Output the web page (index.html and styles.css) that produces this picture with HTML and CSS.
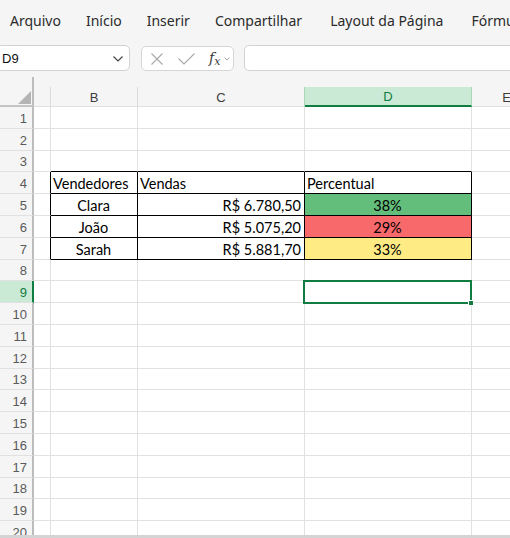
FILE: index.html
```html
<!DOCTYPE html>
<html lang="pt-BR">
<head>
<meta charset="utf-8">
<title>Planilha</title>
<link rel="stylesheet" href="styles.css">
</head>
<body>
<div class="menu">
  <span>Arquivo</span><span>Início</span><span>Inserir</span><span>Compartilhar</span><span class="wide">Layout da Página</span><span class="wide">Fórmulas</span>
</div>
<div class="fbar">
  <div class="namebox"><span class="ref">D9</span>
    <svg class="nb-chev" width="10" height="6" viewBox="0 0 10 6"><polyline points="0.5,0.5 5,5 9.5,0.5" fill="none" stroke="#444" stroke-width="1.2"/></svg>
  </div>
  <div class="fxbox">
    <svg class="ic-x" width="12" height="12" viewBox="0 0 12 12"><path d="M0.5 0.5 L11.5 11.5 M11.5 0.5 L0.5 11.5" stroke="#a8a8a8" stroke-width="1.1" fill="none"/></svg>
    <svg class="ic-ok" width="17" height="12" viewBox="0 0 17 12"><polyline points="0.5,5.5 6,11 16.5,0.5" fill="none" stroke="#a8a8a8" stroke-width="1.1"/></svg>
    <span class="fx">f<span class="fxs">x</span></span>
    <svg class="ic-dd" width="6" height="4" viewBox="0 0 6 4"><polyline points="0.5,0.5 3,3 5.5,0.5" fill="none" stroke="#a8a8a8" stroke-width="1"/></svg>
  </div>
  <div class="finput"></div>
</div>
<div class="sheet">
  <div class="grid">
    <div class="corner"><span class="tri"></span></div>
    <div class="ch"><div class="chi"></div></div>
    <div class="ch"><div class="chi">B</div></div>
    <div class="ch"><div class="chi pre">C</div></div>
    <div class="ch"><div class="chi act">D</div></div>
    <div class="ch"><div class="chi">E</div></div>
    <div class="ch"><div class="chi"></div></div>

    <div class="rh">1</div><div class="c"></div><div class="c"></div><div class="c"></div><div class="c"></div><div class="c"></div><div class="c"></div>
    <div class="rh">2</div><div class="c"></div><div class="c"></div><div class="c"></div><div class="c"></div><div class="c"></div><div class="c"></div>
    <div class="rh">3</div><div class="c"></div><div class="c tb"></div><div class="c tb"></div><div class="c tb"></div><div class="c"></div><div class="c"></div>
    <div class="rh">4</div><div class="c lb"></div><div class="c t">Vendedores</div><div class="c t">Vendas</div><div class="c t">Percentual</div><div class="c"></div><div class="c"></div>
    <div class="rh">5</div><div class="c lb"></div><div class="c t mid">Clara</div><div class="c t num">R$ 6.780,50</div><div class="c t mid green">38%</div><div class="c"></div><div class="c"></div>
    <div class="rh">6</div><div class="c lb"></div><div class="c t mid">João</div><div class="c t num">R$ 5.075,20</div><div class="c t mid red">29%</div><div class="c"></div><div class="c"></div>
    <div class="rh">7</div><div class="c lb"></div><div class="c t mid">Sarah</div><div class="c t num">R$ 5.881,70</div><div class="c t mid yellow">33%</div><div class="c"></div><div class="c"></div>
    <div class="rh">8</div><div class="c"></div><div class="c"></div><div class="c"></div><div class="c"></div><div class="c"></div><div class="c"></div>
    <div class="rh act">9</div><div class="c"></div><div class="c"></div><div class="c"></div><div class="c sel"><span class="handle"></span></div><div class="c"></div><div class="c"></div>
    <div class="rh">10</div><div class="c"></div><div class="c"></div><div class="c"></div><div class="c"></div><div class="c"></div><div class="c"></div>
    <div class="rh">11</div><div class="c"></div><div class="c"></div><div class="c"></div><div class="c"></div><div class="c"></div><div class="c"></div>
    <div class="rh">12</div><div class="c"></div><div class="c"></div><div class="c"></div><div class="c"></div><div class="c"></div><div class="c"></div>
    <div class="rh">13</div><div class="c"></div><div class="c"></div><div class="c"></div><div class="c"></div><div class="c"></div><div class="c"></div>
    <div class="rh">14</div><div class="c"></div><div class="c"></div><div class="c"></div><div class="c"></div><div class="c"></div><div class="c"></div>
    <div class="rh">15</div><div class="c"></div><div class="c"></div><div class="c"></div><div class="c"></div><div class="c"></div><div class="c"></div>
    <div class="rh">16</div><div class="c"></div><div class="c"></div><div class="c"></div><div class="c"></div><div class="c"></div><div class="c"></div>
    <div class="rh">17</div><div class="c"></div><div class="c"></div><div class="c"></div><div class="c"></div><div class="c"></div><div class="c"></div>
    <div class="rh">18</div><div class="c"></div><div class="c"></div><div class="c"></div><div class="c"></div><div class="c"></div><div class="c"></div>
    <div class="rh">19</div><div class="c"></div><div class="c"></div><div class="c"></div><div class="c"></div><div class="c"></div><div class="c"></div>
    <div class="rh">20</div><div class="c"></div><div class="c"></div><div class="c"></div><div class="c"></div><div class="c"></div><div class="c"></div>
  </div>
</div>
<div class="hscroll"></div>
</body>
</html>
```
FILE: styles.css
```css
* { box-sizing: border-box; }
html, body { margin: 0; padding: 0; }
body {
  width: 510px;
  height: 538px;
  overflow: hidden;
  background: #f5f5f5;
  font-family: "Liberation Sans", Arial, sans-serif;
}
.menu {
  height: 40px;
  display: flex;
  align-items: center;
  gap: 25px;
  padding-left: 10px;
  white-space: nowrap;
  font-family: "Noto Sans", "Open Sans", sans-serif;
  font-size: 14px;
  color: #2b2b2b;
}
.menu .wide { margin-left: 3px; }
.fbar {
  display: flex;
  align-items: center;
  height: 37px;
  padding: 5px 0 6px 0;
}
.namebox {
  width: 134px;
  height: 26px;
  margin-left: -4px;
  flex: none;
  display: flex;
  align-items: center;
  justify-content: space-between;
  background: #fff;
  border: 1px solid #d2d2d2;
  border-radius: 5px;
  padding: 0 6px 0 5px;
  font-size: 13px;
  color: #111;
}
.nb-chev { margin-top: 1px; }
.fxbox {
  width: 93px;
  height: 25px;
  margin-left: 11px;
  flex: none;
  display: flex;
  align-items: center;
  background: #fff;
  border: 1px solid #d6d6d6;
  border-radius: 5px;
  padding-left: 9px;
}
.ic-x { margin-top: 1px; }
.ic-ok { margin-left: 15px; margin-top: 1px; }
.fx {
  margin-left: 14px;
  font-family: "DejaVu Serif", "Liberation Serif", serif;
  font-style: italic;
  font-size: 14px;
  color: #3a3a3a;
  line-height: 1;
}
.fxs { font-size: 11px; position: relative; top: 2px; }
.ic-dd { margin-left: 4px; margin-top: 2px; }
.finput {
  flex: 1;
  margin-left: 10px;
  margin-right: -10px;
  height: 26px;
  background: #fff;
  border: 1px solid #d2d2d2;
  border-radius: 5px;
}
.sheet {
  height: 458px;
  overflow: hidden;
  background: #fff;
}
.grid {
  display: grid;
  grid-template-columns: 34px 17px 87px 167px 167px 70px 1fr;
  grid-template-rows: 30px repeat(20, 21.8px);
}
.corner {
  background: #f5f5f5;
  border-right: 2px solid #bdbdbd;
  border-bottom: 2px solid #c4c4c4;
  display: flex;
  align-items: flex-end;
  justify-content: flex-end;
  padding: 0 1px 1px 0;
}
.tri {
  width: 0;
  height: 0;
  border-left: 13px solid transparent;
  border-bottom: 13px solid #b4b4b4;
}
.ch {
  background: #f5f5f5;
  padding-top: 10px;
}
.chi {
  height: 20px;
  border-right: 1px solid #dcdcdc;
  border-bottom: 1px solid #e1e1e1;
  display: flex;
  align-items: center;
  justify-content: center;
  font-size: 13px;
  color: #3c3c3c;
  padding-top: 1px;
}
.chi.pre { border-right-color: #a9d8b9; }
.chi.act {
  background: #caead6;
  color: #107c41;
  border-right-color: #a9d8b9;
  border-bottom: 2px solid #107c41;
}
.rh {
  background: #f5f5f5;
  border-right: 2px solid #bdbdbd;
  border-bottom: 1px solid #e1e1e1;
  display: flex;
  align-items: center;
  justify-content: flex-end;
  padding: 2px 5px 0 0;
  font-size: 13px;
  color: #5a5a5a;
}
.rh.act {
  background: #caead6;
  color: #107c41;
  border-right-color: #107c41;
}
.c {
  border-right: 1px solid #e1e1e1;
  border-bottom: 1px solid #e1e1e1;
  font-family: Lato, "Liberation Sans", sans-serif;
  font-size: 14.5px;
  color: #000;
  display: flex;
  align-items: center;
  padding: 2px 3px 0 2px;
  white-space: nowrap;
  overflow: hidden;
}
.c.tb { border-bottom-color: #000; }
.c.lb { border-right-color: #000; }
.c.t { border-right-color: #000; border-bottom-color: #000; }
.c.mid { justify-content: center; }
.c.num { justify-content: flex-end; }
.c.green { background: #63be7b; }
.c.red { background: #f8696b; }
.c.yellow { background: #ffeb84; }
.c.sel {
  position: relative;
  overflow: visible;
}
.c.sel::before {
  content: "";
  position: absolute;
  left: -2px;
  top: -1px;
  right: -1px;
  bottom: -2px;
  border: 2px solid #107c41;
}
.handle {
  position: absolute;
  right: -3px;
  bottom: -4px;
  width: 6px;
  height: 6px;
  background: #107c41;
  border: 1px solid #fff;
  z-index: 2;
}
.hscroll {
  height: 6px;
  background: #d4d4d4;
}
```
